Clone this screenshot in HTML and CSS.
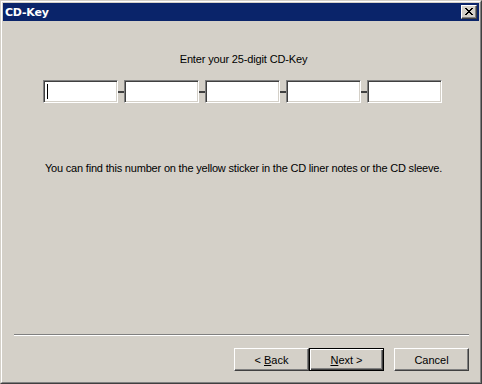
FILE: index.html
```html
<!DOCTYPE html>
<html lang="en">
<head>
    <meta charset="UTF-8">
    <title>CD-Key</title>
    <link rel="stylesheet" href="styles.css">
</head>
<body>
    <div class="window">
        <div class="frame">
            <div class="titlebar">
                <span class="title">CD-Key</span>
                <span class="close">
                    <svg width="8" height="7" viewBox="0 0 8 7">
                        <path d="M0 0h2v1h1v1h2v-1h1v-1h2v1h-1v1h-1v1h-1v1h1v1h1v1h1v1h-2v-1h-1v-1h-2v1h-1v1h-2v-1h1v-1h1v-1h1v-1h-1v-1h-1v-1h-1z" fill="#000"/>
                    </svg>
                </span>
            </div>
            <div class="client">
                <div class="body">
                    <p class="label">Enter your 25-digit CD-Key</p>
                    <div class="keys">
                        <span class="edit"><span class="caret"></span></span>
                        <span class="dash"></span>
                        <span class="edit"></span>
                        <span class="dash"></span>
                        <span class="edit"></span>
                        <span class="dash"></span>
                        <span class="edit"></span>
                        <span class="dash"></span>
                        <span class="edit"></span>
                    </div>
                    <p class="hint">You can find this number on the yellow sticker in the CD liner notes or the CD sleeve.</p>
                </div>
                <div class="separator"></div>
                <div class="buttons">
                    <button class="btn">&lt; <u>B</u>ack</button>
                    <button class="btn default"><u>N</u>ext &gt;</button>
                    <button class="btn cancel">Cancel</button>
                </div>
            </div>
        </div>
    </div>
</body>
</html>
```

FILE: styles.css
```css
body {
    margin: 0;
    background: #d4d0c8;
    font-family: "Liberation Sans", Arial, sans-serif;
    font-size: 11px;
    color: #000;
}

.window {
    box-sizing: border-box;
    width: 482px;
    height: 384px;
    border: 1px solid;
    border-color: #d4d0c8 #404040 #404040 #d4d0c8;
    background: #d4d0c8;
}

.frame {
    box-sizing: border-box;
    height: 100%;
    border: 1px solid;
    border-color: #fff #808080 #808080 #fff;
    padding: 1px;
    display: flex;
    flex-direction: column;
}

.titlebar {
    height: 18px;
    background: #0a246a;
    display: flex;
    align-items: center;
    justify-content: space-between;
    padding: 0 2px 0 2px;
}

.title {
    color: #fff;
    font-family: "DejaVu Sans", sans-serif;
    font-weight: bold;
    font-size: 11px;
    letter-spacing: -0.2px;
}

.close {
    box-sizing: border-box;
    width: 16px;
    height: 14px;
    background: #d4d0c8;
    border: 1px solid;
    border-color: #fff #404040 #404040 #fff;
    box-shadow: inset -1px -1px 0 #808080;
    display: flex;
    align-items: center;
    justify-content: center;
    padding: 0 1px 1px 0;
}

.client {
    flex: 1;
    display: flex;
    flex-direction: column;
    padding: 0 10px 10px 11px;
}

.body {
    flex: 1;
    margin: 0 25px 0 29px;
    text-align: center;
}

.label {
    margin: 32px 0 0;
    line-height: 13px;
    letter-spacing: -0.15px;
}

.keys {
    display: flex;
    align-items: center;
    margin-top: 14px;
}

.edit {
    box-sizing: border-box;
    flex-shrink: 0;
    width: 75px;
    height: 23px;
    background: #fff;
    border: 1px solid;
    border-color: #808080 #fff #fff #808080;
    box-shadow: inset 1px 1px 0 #404040, inset -1px -1px 0 #d4d0c8;
    padding: 3px 0 0 3px;
    display: flex;
}

.caret {
    width: 1px;
    height: 15px;
    background: #000;
}

.dash {
    flex-shrink: 0;
    width: 6px;
    height: 2px;
    background: #404040;
}

.hint {
    margin: 59px 0 0;
    line-height: 13px;
    white-space: nowrap;
    letter-spacing: -0.19px;
}

.separator {
    border-top: 1px solid #808080;
    border-bottom: 1px solid #fff;
    height: 0;
}

.buttons {
    display: flex;
    justify-content: flex-end;
    margin-top: 12px;
}

.btn {
    box-sizing: border-box;
    width: 75px;
    height: 23px;
    background: #d4d0c8;
    font-family: "Liberation Sans", Arial, sans-serif;
    font-size: 11px;
    color: #000;
    border: 1px solid;
    border-color: #fff #404040 #404040 #fff;
    box-shadow: inset -1px -1px 0 #808080;
    padding: 0;
}

.btn.default {
    border-color: #000;
    box-shadow: inset 1px 1px 0 #fff, inset -1px -1px 0 #404040, inset -2px -2px 0 #808080;
}

.btn.cancel {
    margin-left: 10px;
}
```
